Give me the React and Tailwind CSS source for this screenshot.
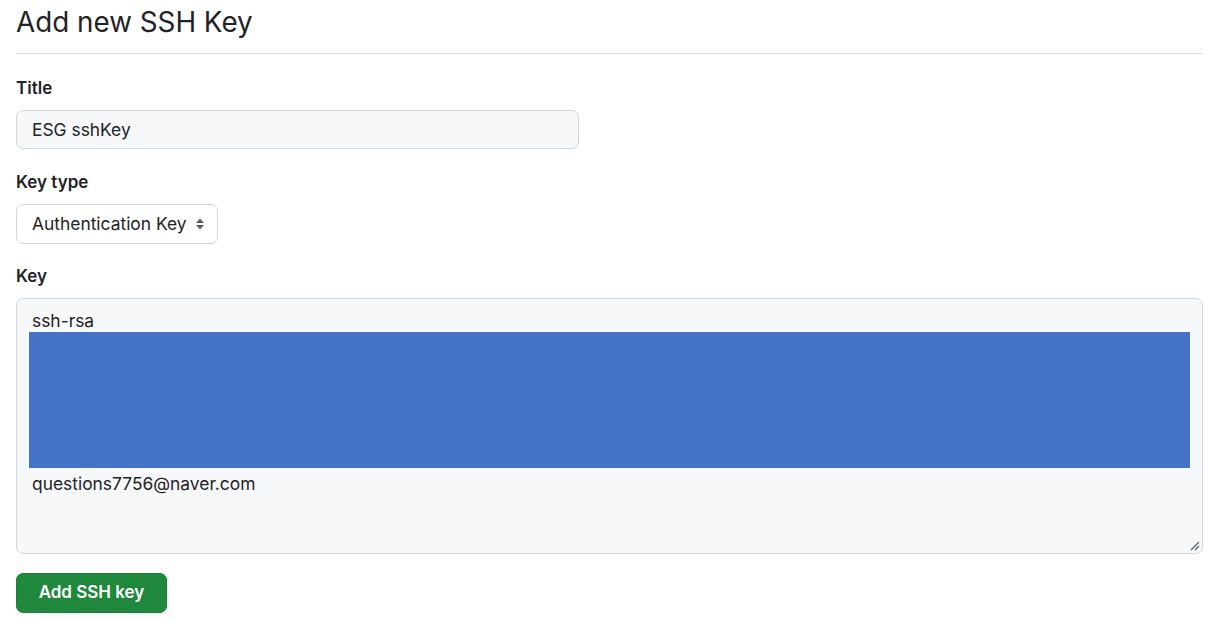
import React, { useState } from 'react';

const font = { fontFamily: 'Inter, "Liberation Sans", Arial, sans-serif' };

function SelectArrows() {
  return (
    <svg width="10" height="14" viewBox="0 0 10 14" className="text-[#57606a]">
      <path d="M5 1.5 L9 6 H1 Z" fill="currentColor" />
      <path d="M5 12.5 L1 8 H9 Z" fill="currentColor" />
    </svg>
  );
}

export default function App() {
  const [title, setTitle] = useState('ESG sshKey');

  return (
    <div className="bg-white min-h-[620px] pl-4 pr-[23px] text-[#1f2328]" style={font}>
      {/* Header */}
      <div className="border-b border-[#d8dee4] pt-[3px] pb-[12px]">
        <h2 className="text-[27.8px] leading-[38px] font-normal">Add new SSH Key</h2>
      </div>

      <form className="pt-[24px]" onSubmit={(e) => e.preventDefault()}>
        <label className="block text-[17px] leading-[20px] font-semibold">Title</label>
        <input
          type="text"
          value={title}
          onChange={(e) => setTitle(e.target.value)}
          className="mt-[12px] block w-[563px] h-[39px] px-[15px] rounded-[7px] border border-[#d0d7de] bg-[#f6f8fa] text-[17.4px] outline-none"
        />

        <label className="block mt-[23px] text-[17px] leading-[20px] font-semibold">Key type</label>
        <div className="mt-[12px] w-[202px] h-[40px] pl-[15px] pr-[12px] rounded-[7px] border border-[#d0d7de] bg-white flex items-center justify-between text-[17.4px]">
          <span>Authentication Key</span>
          <SelectArrows />
        </div>

        <label className="block mt-[22px] text-[17px] leading-[20px] font-semibold">Key</label>
        <div className="relative mt-[12px] h-[256px] rounded-[7px] border border-[#d0d7de] bg-[#f6f8fa] pl-[12px] pr-[12px] pt-[11px] text-[17.4px] leading-[22px]">
          <div className="pl-[3px]">ssh-rsa</div>
          <div className="h-[136px] bg-[#4472c4]"></div>
          <div className="pl-[3px] pt-[5px]">questions7756@naver.com</div>
          <svg className="absolute right-[2px] bottom-[2px]" width="11" height="11" viewBox="0 0 11 11">
            <path d="M10 2 L2 10 M10 6 L6 10" stroke="#57606a" strokeWidth="1.2" />
          </svg>
        </div>

        <button
          type="submit"
          className="mt-[19px] w-[151px] h-[40px] rounded-[7px] bg-[#1f883d] text-white text-[17px] font-semibold border border-[#1a7f37]"
        >
          Add SSH key
        </button>
      </form>
    </div>
  );
}
